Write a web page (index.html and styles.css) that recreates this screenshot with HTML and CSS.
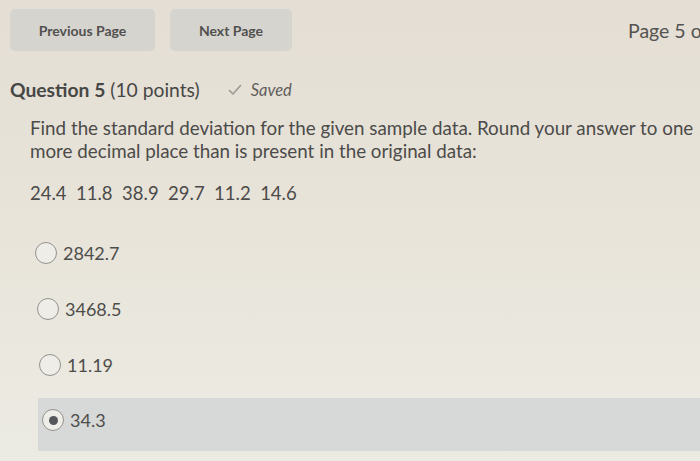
FILE: index.html
```html
<!DOCTYPE html>
<html lang="en">
  <head>
    <meta charset="UTF-8" />
    <meta name="viewport" content="width=device-width, initial-scale=1.0" />
    <title>Quiz - Question 5</title>
    <link rel="stylesheet" href="styles.css">
  </head>
  <body>
    <div class="page">
      <div class="topbar">
        <button class="nav-btn prev">Previous Page</button>
        <button class="nav-btn next">Next Page</button>
        <span class="page-count">Page 5 of 10</span>
      </div>

      <div class="question-head">
        <h2><strong>Question 5</strong> (10 points)</h2>
        <span class="saved">
          <svg width="14" height="12" viewBox="0 0 14 12">
            <path d="M1.5 6.5 L5 10 L12.5 1.5" fill="none" stroke="#9a9894" stroke-width="1.6" stroke-linecap="round" stroke-linejoin="round" />
          </svg>
          Saved
        </span>
      </div>

      <div class="question-body">
        <p class="prompt">
          Find the standard deviation for the given sample data. Round your answer to one<br>
          more decimal place than is present in the original data:
        </p>
        <p class="data">24.4&nbsp; 11.8&nbsp; 38.9&nbsp; 29.7&nbsp; 11.2&nbsp; 14.6</p>

        <div class="options">
          <label class="option opt1">
            <span class="radio"></span> 2842.7
          </label>
          <label class="option opt2">
            <span class="radio"></span> 3468.5
          </label>
          <label class="option opt3">
            <span class="radio"></span> 11.19
          </label>
          <label class="option opt4 selected">
            <span class="radio"></span> 34.3
          </label>
        </div>
      </div>
    </div>
  </body>
</html>
```

FILE: styles.css
```css
body {
  margin: 0;
  font-family: Lato, "Open Sans", sans-serif;
  color: #4a4a48;
  background: linear-gradient(180deg, #e4ded4 0%, #e8e4da 50%, #ecebe3 100%);
  height: 461px;
  overflow: hidden;
}

.page {
  width: 700px;
  overflow: hidden;
}

.topbar {
  display: flex;
  align-items: center;
  padding: 9px 0 0 10px;
  height: 42px;
  white-space: nowrap;
}

.nav-btn {
  flex-shrink: 0;
  height: 42px;
  border: none;
  border-radius: 5px;
  background-color: #d6d4cf;
  color: #52514f;
  font-family: Lato, sans-serif;
  font-weight: bold;
  font-size: 14px;
  cursor: pointer;
}

.prev {
  width: 145px;
  margin-right: 15px;
}

.next {
  width: 122px;
}

.page-count {
  flex-shrink: 0;
  margin-left: 336px;
  font-size: 19.5px;
  color: #545350;
}

.question-head {
  display: flex;
  align-items: center;
  margin: 27px 0 0 10px;
}

.question-head h2 {
  margin: 0;
  font-size: 19.3px;
  font-weight: normal;
  color: #474745;
}

.saved {
  margin-left: 28px;
  font-size: 16.5px;
  font-style: italic;
  color: #5f5e5b;
  display: flex;
  align-items: center;
  gap: 9px;
}

.question-body {
  padding-left: 30px;
}

.prompt {
  margin: 15px 0 0;
  font-size: 18.8px;
  line-height: 23px;
  color: #4c4b49;
  white-space: nowrap;
}

.data {
  margin: 20px 0 0;
  font-size: 18.5px;
  color: #4c4b49;
}

.options {
  margin-top: 22px;
}

.option {
  display: flex;
  align-items: center;
  gap: 6px;
  height: 54px;
  font-size: 18px;
  color: #4e4d4b;
  margin-bottom: 2px;
}

.opt1 {
  padding-left: 5px;
}

.opt2 {
  padding-left: 7px;
}

.opt3 {
  padding-left: 9px;
}

.opt4 {
  box-sizing: border-box;
  height: 53px;
  margin-left: 8px;
  margin-top: 6px;
  padding-left: 4px;
  padding-bottom: 9px;
}

.radio {
  width: 20px;
  height: 20px;
  border: 1.5px solid #93928f;
  border-radius: 50%;
  background: #eeede8;
  display: flex;
  align-items: center;
  justify-content: center;
}

.selected {
  background-color: #d6d9d7;
}

.selected .radio::after {
  content: "";
  width: 9px;
  height: 9px;
  border-radius: 50%;
  background: #55575a;
}
```
